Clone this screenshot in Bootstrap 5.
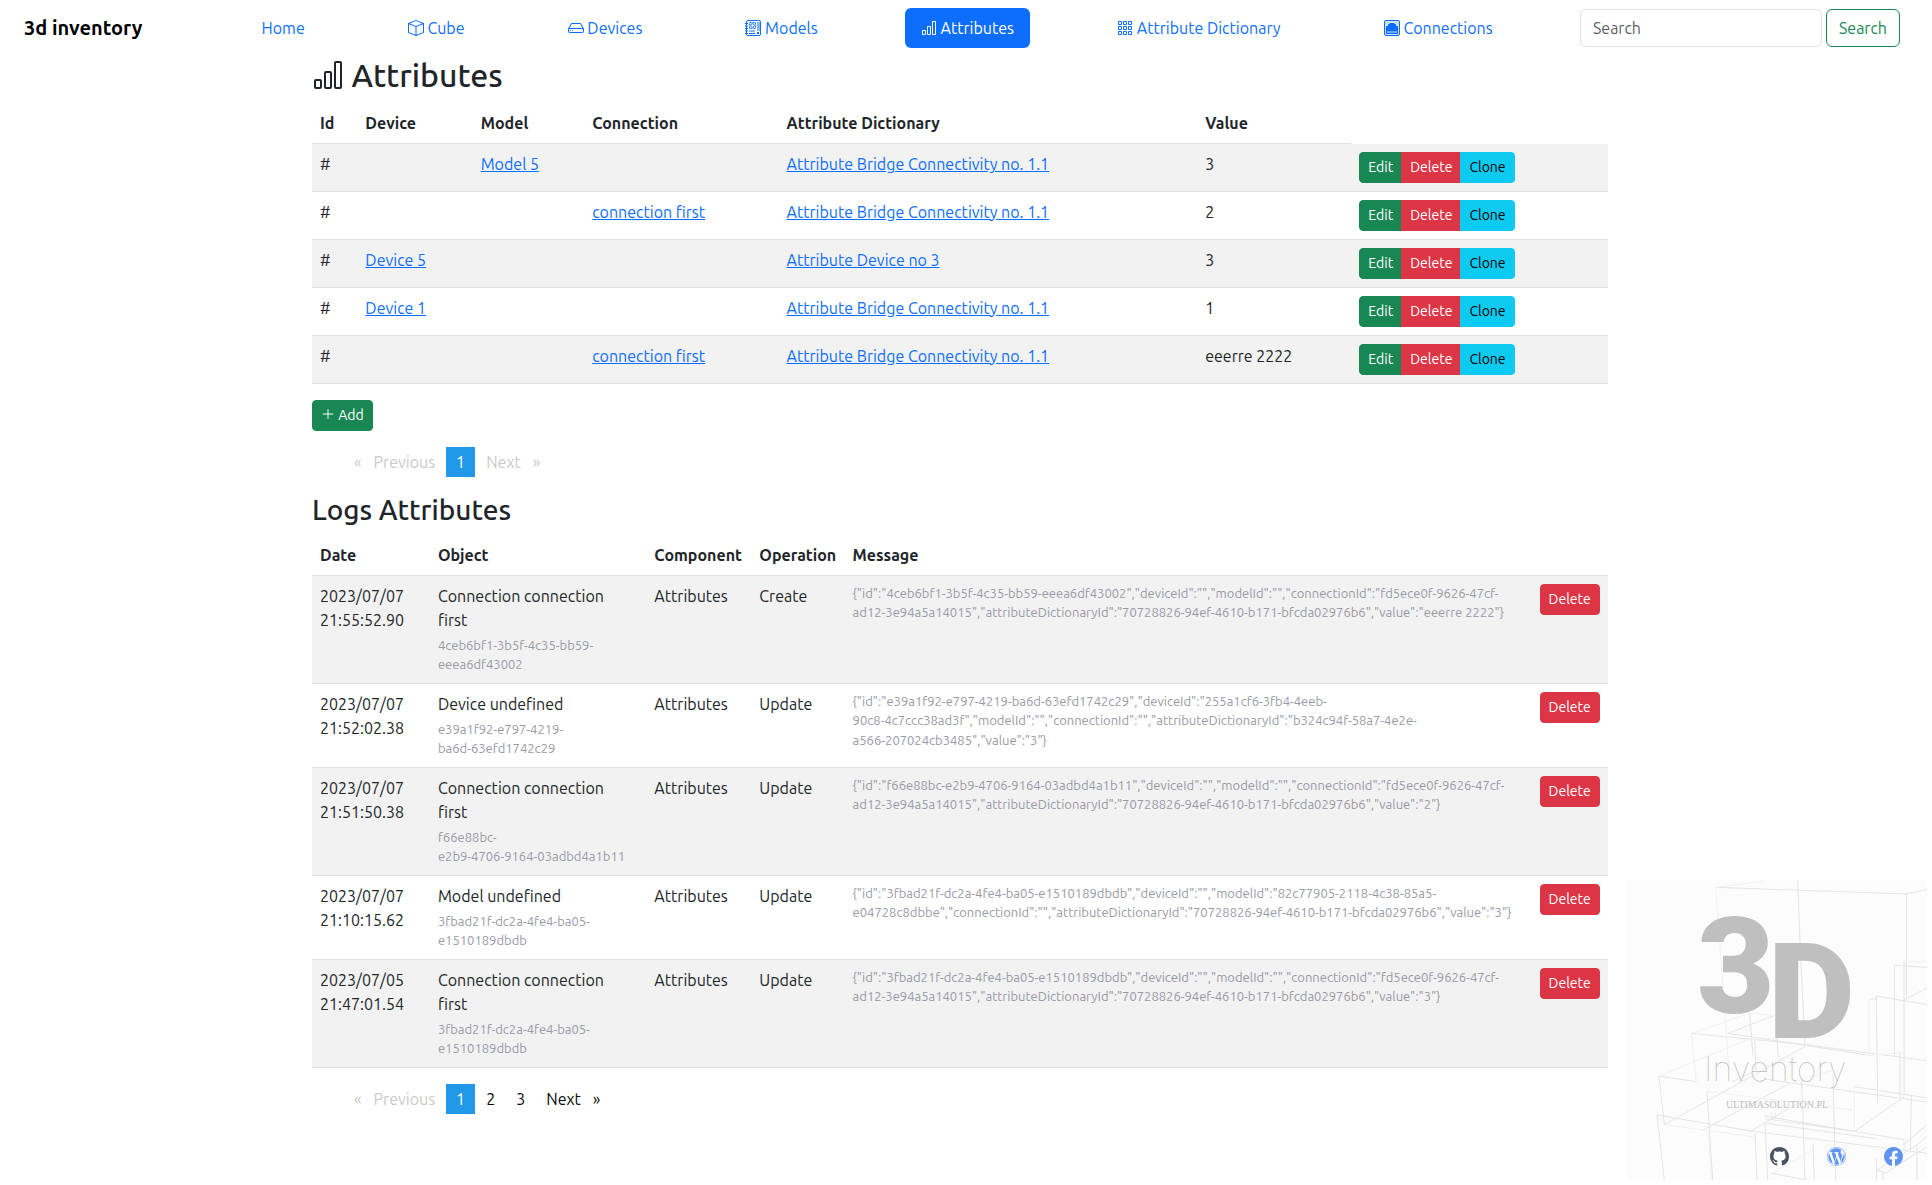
<!doctype html>
<html lang="en">
<head>
<meta charset="utf-8">
<meta name="viewport" content="width=device-width, initial-scale=1">
<title>3d inventory - Attributes</title>
<link href="https://cdn.jsdelivr.net/npm/bootstrap@5.3.0/dist/css/bootstrap.min.css" rel="stylesheet">
<style>
  body { font-family: Ubuntu, "Noto Sans", "Liberation Sans", sans-serif; padding-right: 12px; }
  .ico { width: 1em; height: 1em; fill: currentColor; vertical-align: -.125em; }
  .main-nav { padding: 8px 8px 8px 12px; }
  .main-nav .navbar-brand { font-weight: 700; }
  .search-box { width: 242px; }
  .page-title { font-size: 32px; line-height: 39px; }
  .section-title { font-size: 28px; line-height: 34px; }
  .grid-table { table-layout: fixed; }
  .grid-table .btn { white-space: nowrap; }
  .grid-table thead { vertical-align: bottom; }
  .fine-text { font-size: 13px; line-height: 1.5; color: #9999a6; }
  .pager { list-style: none; margin: 0 0 16px; padding-left: 32px; display: flex; gap: 1px; }
  .pager a, .pager span { display: block; padding: 3px 10px; color: #0a0a0a; text-decoration: none; }
  .pager .is-off { color: #cacaca; }
  .pager .is-current { background: #2199e8; color: #fefefe; }
  .pager .arrow-before::before { content: "«"; display: inline-block; margin-right: 12px; }
  .pager .arrow-after::after { content: "»"; display: inline-block; margin-left: 12px; }
  .brand-corner { position: fixed; right: 5px; bottom: 5px; width: 300px; height: 300px; background: #fcfcfc; }
  .brand-corner .art { position: absolute; inset: 0; width: 100%; height: 100%; }
  .social-bar { position: absolute; right: 24px; bottom: 14px; display: flex; gap: 38px; opacity: .85; }
  .social-bar a { display: block; line-height: 0; color: #4682f0; font-size: 19px; }
  .social-bar a.gh { color: #2b3648; }
</style>
</head>
<body>
<nav class="navbar navbar-expand-lg main-nav">
  <div class="container-fluid flex-nowrap">
    <a class="navbar-brand py-0" href="#">3d inventory</a>
    <ul class="nav nav-pills flex-grow-1 justify-content-evenly ps-3">
      <li class="nav-item"><a class="nav-link" href="#">Home</a></li>
      <li class="nav-item"><a class="nav-link" href="#"><svg class="ico" viewBox="0 0 16 16"><path d="M8.186 1.113a.5.5 0 0 0-.372 0L1.846 3.5 8 5.961 14.154 3.5 8.186 1.113zM15 4.239l-6.5 2.6v7.922l6.5-2.6V4.24zM7.5 14.762V6.838L1 4.239v7.923l6.5 2.6zM7.443.184a1.5 1.5 0 0 1 1.114 0l7.129 2.852A.5.5 0 0 1 16 3.5v8.662a1 1 0 0 1-.629.928l-7.185 2.874a.5.5 0 0 1-.372 0L.63 13.09a1 1 0 0 1-.63-.928V3.5a.5.5 0 0 1 .314-.464L7.443.184z"/></svg> Cube</a></li>
      <li class="nav-item"><a class="nav-link" href="#"><svg class="ico" viewBox="0 0 16 16"><path d="M4.5 11a.5.5 0 1 0 0-1 .5.5 0 0 0 0 1zM3 10.5a.5.5 0 1 1-1 0 .5.5 0 0 1 1 0z"/><path d="M16 11a2 2 0 0 1-2 2H2a2 2 0 0 1-2-2V9.51c0-.418.105-.83.305-1.197l2.472-4.531A1.5 1.5 0 0 1 4.094 3h7.812a1.5 1.5 0 0 1 1.317.782l2.472 4.53c.2.368.305.78.305 1.198V11zM3.655 4.26 1.592 8.043C1.724 8.014 1.86 8 2 8h12c.14 0 .276.014.408.042L12.345 4.26a.5.5 0 0 0-.439-.26H4.094a.5.5 0 0 0-.44.26zM1 10v1a1 1 0 0 0 1 1h12a1 1 0 0 0 1-1v-1a1 1 0 0 0-1-1H2a1 1 0 0 0-1 1z"/></svg> Devices</a></li>
      <li class="nav-item"><a class="nav-link" href="#"><svg class="ico" viewBox="0 0 16 16"><rect x="1.5" y=".5" width="14" height="15" rx="1.5" fill="none" stroke="currentColor"/><path d="M0 3h3v1H0zM0 5.500h3v1H0zM0 8h3v1H0zM0 10.500h3v1H0zM0 13h3v1H0z"/><path d="M12 2h3v9h-3z" opacity=".5"/><rect x="4.500" y="2.500" width="6" height="6" fill="none" stroke="currentColor" stroke-dasharray="2 1"/><circle cx="7.500" cy="5.500" r="1.800" fill="none" stroke="currentColor"/><path d="M4 10.500h6v1H4zM4 13h6v1H4zM12 12h2v2h-2z"/></svg> Models</a></li>
      <li class="nav-item"><a class="nav-link active" aria-current="page" href="#"><svg class="ico" viewBox="0 0 16 16"><path d="M4 11H2v3h2v-3zm5-4H7v7h2V7zm5-5v12h-2V2h2zm-2-1a1 1 0 0 0-1 1v12a1 1 0 0 0 1 1h2a1 1 0 0 0 1-1V2a1 1 0 0 0-1-1h-2zM6 7a1 1 0 0 1 1-1h2a1 1 0 0 1 1 1v7a1 1 0 0 1-1 1H7a1 1 0 0 1-1-1V7zm-5 4a1 1 0 0 1 1-1h2a1 1 0 0 1 1 1v3a1 1 0 0 1-1 1H2a1 1 0 0 1-1-1v-3z"/></svg> Attributes</a></li>
      <li class="nav-item"><a class="nav-link" href="#"><svg class="ico" viewBox="0 0 16 16"><g fill="none" stroke="currentColor"><path d="M1.500 1.500h3v3h-3zM6.500 1.500h3v3h-3zM11.500 1.500h3v3h-3zM1.500 6.500h3v3h-3zM6.500 6.500h3v3h-3zM11.500 6.500h3v3h-3zM1.500 11.500h3v3h-3zM6.500 11.500h3v3h-3zM11.500 11.500h3v3h-3z"/></g></svg> Attribute Dictionary</a></li>
      <li class="nav-item"><a class="nav-link" href="#"><svg class="ico" viewBox="0 0 16 16"><rect x=".5" y=".5" width="15" height="15" rx="1.500" fill="#0d6efd" fill-opacity=".2" stroke="currentColor"/><path fill-rule="evenodd" d="M14 13.500v-7a.5.5 0 0 0-.5-.5H12V4.500a.5.5 0 0 0-.5-.5h-1v-.5A.5.5 0 0 0 10 3H6a.5.5 0 0 0-.5.5V4h-1a.5.5 0 0 0-.5.5V6H2.500a.5.5 0 0 0-.5.5v7a.5.5 0 0 0 .5.5h11a.5.5 0 0 0 .5-.5zM3.500 11h1v2h-1zM5.500 11h1v2h-1zM7.500 11h1v2h-1zM9.500 11h1v2h-1zM11.500 11h1v2h-1z"/></svg> Connections</a></li>
    </ul>
    <form class="d-flex gap-1" role="search">
      <input class="form-control search-box" type="search" placeholder="Search" aria-label="Search">
      <button class="btn btn-outline-success" type="submit">Search</button>
    </form>
  </div>
</nav>

<main class="container">
  <h2 class="page-title"><svg class="ico" viewBox="0 0 16 16"><path d="M4 11H2v3h2v-3zm5-4H7v7h2V7zm5-5v12h-2V2h2zm-2-1a1 1 0 0 0-1 1v12a1 1 0 0 0 1 1h2a1 1 0 0 0 1-1V2a1 1 0 0 0-1-1h-2zM6 7a1 1 0 0 1 1-1h2a1 1 0 0 1 1 1v7a1 1 0 0 1-1 1H7a1 1 0 0 1-1-1V7zm-5 4a1 1 0 0 1 1-1h2a1 1 0 0 1 1 1v3a1 1 0 0 1-1 1H2a1 1 0 0 1-1-1v-3z"/></svg> Attributes</h2>
  <table class="table table-striped grid-table">
    <colgroup><col style="width:3.5%"><col style="width:8.9%"><col style="width:8.6%"><col style="width:15%"><col style="width:32.3%"><col style="width:11.9%"><col style="width:19.8%"></colgroup>
    <thead><tr><th scope="col">Id</th><th scope="col">Device</th><th scope="col">Model</th><th scope="col">Connection</th><th scope="col">Attribute Dictionary</th><th scope="col">Value</th></tr></thead>
    <tbody>
      <tr><td>#</td><td></td><td><a href="#">Model 5</a></td><td></td><td><a href="#">Attribute Bridge Connectivity no. 1.1</a></td><td>3</td><td><div class="btn-group btn-group-sm d-inline-flex align-top"><button type="button" class="btn btn-success">Edit</button><button type="button" class="btn btn-danger">Delete</button><button type="button" class="btn btn-info">Clone</button></div></td></tr>
      <tr><td>#</td><td></td><td></td><td><a href="#">connection first</a></td><td><a href="#">Attribute Bridge Connectivity no. 1.1</a></td><td>2</td><td><div class="btn-group btn-group-sm d-inline-flex align-top"><button type="button" class="btn btn-success">Edit</button><button type="button" class="btn btn-danger">Delete</button><button type="button" class="btn btn-info">Clone</button></div></td></tr>
      <tr><td>#</td><td><a href="#">Device 5</a></td><td></td><td></td><td><a href="#">Attribute Device no 3</a></td><td>3</td><td><div class="btn-group btn-group-sm d-inline-flex align-top"><button type="button" class="btn btn-success">Edit</button><button type="button" class="btn btn-danger">Delete</button><button type="button" class="btn btn-info">Clone</button></div></td></tr>
      <tr><td>#</td><td><a href="#">Device 1</a></td><td></td><td></td><td><a href="#">Attribute Bridge Connectivity no. 1.1</a></td><td>1</td><td><div class="btn-group btn-group-sm d-inline-flex align-top"><button type="button" class="btn btn-success">Edit</button><button type="button" class="btn btn-danger">Delete</button><button type="button" class="btn btn-info">Clone</button></div></td></tr>
      <tr><td>#</td><td></td><td></td><td><a href="#">connection first</a></td><td><a href="#">Attribute Bridge Connectivity no. 1.1</a></td><td>eeerre 2222</td><td><div class="btn-group btn-group-sm d-inline-flex align-top"><button type="button" class="btn btn-success">Edit</button><button type="button" class="btn btn-danger">Delete</button><button type="button" class="btn btn-info">Clone</button></div></td></tr>
    </tbody>
  </table>
  <button type="button" class="btn btn-success btn-sm d-block mb-3"><svg class="ico" viewBox="0 0 16 16"><path d="M8 2a.5.5 0 0 1 .5.5v5h5a.5.5 0 0 1 0 1h-5v5a.5.5 0 0 1-1 0v-5h-5a.5.5 0 0 1 0-1h5v-5A.5.5 0 0 1 8 2z"/></svg> Add</button>
  <ul class="pager" aria-label="Attributes pages">
    <li><span class="is-off arrow-before">Previous</span></li>
    <li><span class="is-current" aria-current="page">1</span></li>
    <li><span class="is-off arrow-after">Next</span></li>
  </ul>

  <h3 class="section-title">Logs Attributes</h3>
  <table class="table table-striped grid-table">
    <colgroup><col style="width:9.1%"><col style="width:16.7%"><col style="width:8.1%"><col style="width:7.2%"><col style="width:53%"><col style="width:5.9%"></colgroup>
    <thead><tr><th scope="col">Date</th><th scope="col">Object</th><th scope="col">Component</th><th scope="col">Operation</th><th scope="col">Message</th><th></th></tr></thead>
    <tbody>
      <tr><td>2023/07/07 21:55:52.90</td><td class="pe-3">Connection connection first<div class="fine-text mt-1">4ceb6bf1-3b5f-4c35-bb59-<br>eeea6df43002</div></td><td>Attributes</td><td>Create</td><td><div class="fine-text">{"id":"4ceb6bf1-3b5f-4c35-bb59-eeea6df43002","deviceId":"","modelId":"","connectionId":"fd5ece0f-9626-47cf-<br>ad12-3e94a5a14015","attributeDictionaryId":"70728826-94ef-4610-b171-bfcda02976b6","value":"eeerre 2222"}</div></td><td><button type="button" class="btn btn-danger btn-sm align-top">Delete</button></td></tr>
      <tr><td>2023/07/07 21:52:02.38</td><td class="pe-3">Device undefined<div class="fine-text mt-1">e39a1f92-e797-4219-<br>ba6d-63efd1742c29</div></td><td>Attributes</td><td>Update</td><td><div class="fine-text">{"id":"e39a1f92-e797-4219-ba6d-63efd1742c29","deviceId":"255a1cf6-3fb4-4eeb-<br>90c8-4c7ccc38ad3f","modelId":"","connectionId":"","attributeDictionaryId":"b324c94f-58a7-4e2e-<br>a566-207024cb3485","value":"3"}</div></td><td><button type="button" class="btn btn-danger btn-sm align-top">Delete</button></td></tr>
      <tr><td>2023/07/07 21:51:50.38</td><td class="pe-3">Connection connection first<div class="fine-text mt-1">f66e88bc-<br>e2b9-4706-9164-03adbd4a1b11</div></td><td>Attributes</td><td>Update</td><td><div class="fine-text">{"id":"f66e88bc-e2b9-4706-9164-03adbd4a1b11","deviceId":"","modelId":"","connectionId":"fd5ece0f-9626-47cf-<br>ad12-3e94a5a14015","attributeDictionaryId":"70728826-94ef-4610-b171-bfcda02976b6","value":"2"}</div></td><td><button type="button" class="btn btn-danger btn-sm align-top">Delete</button></td></tr>
      <tr><td>2023/07/07 21:10:15.62</td><td class="pe-3">Model undefined<div class="fine-text mt-1">3fbad21f-dc2a-4fe4-ba05-<br>e1510189dbdb</div></td><td>Attributes</td><td>Update</td><td><div class="fine-text">{"id":"3fbad21f-dc2a-4fe4-ba05-e1510189dbdb","deviceId":"","modelId":"82c77905-2118-4c38-85a5-<br>e04728c8dbbe","connectionId":"","attributeDictionaryId":"70728826-94ef-4610-b171-bfcda02976b6","value":"3"}</div></td><td><button type="button" class="btn btn-danger btn-sm align-top">Delete</button></td></tr>
      <tr><td>2023/07/05 21:47:01.54</td><td class="pe-3">Connection connection first<div class="fine-text mt-1">3fbad21f-dc2a-4fe4-ba05-<br>e1510189dbdb</div></td><td>Attributes</td><td>Update</td><td><div class="fine-text">{"id":"3fbad21f-dc2a-4fe4-ba05-e1510189dbdb","deviceId":"","modelId":"","connectionId":"fd5ece0f-9626-47cf-<br>ad12-3e94a5a14015","attributeDictionaryId":"70728826-94ef-4610-b171-bfcda02976b6","value":"3"}</div></td><td><button type="button" class="btn btn-danger btn-sm align-top">Delete</button></td></tr>
    </tbody>
  </table>
  <ul class="pager" aria-label="Logs pages">
    <li><span class="is-off arrow-before">Previous</span></li>
    <li><span class="is-current" aria-current="page">1</span></li>
    <li><a href="#">2</a></li>
    <li><a href="#">3</a></li>
    <li><a class="arrow-after" href="#">Next</a></li>
  </ul>
</main>

<footer class="brand-corner">
  <svg class="art" viewBox="0 0 300 300">
    <g transform="scale(.33333) translate(-22 -30)" fill="none" stroke="#e4e4e4" stroke-width="3">
      <path d="M288 52 860 72 922 58M534 32 541 218M860 72V386M541 218 556 528M824 560V286L922 292M853 275V672M770 378 922 404M770 378 774 698M748 388 770 386M844 394 922 354M215 490 560 524 922 572M325 490 750 556M325 490 465 436M390 430 400 556M405 508 409 600M472 506 476 566M118 618 230 635M134 764 556 530M338 635 400 606M440 628 922 696M112 735 400 784 922 850M118 618 134 764M112 735 134 930M262 664 279 930M246 782 510 640M386 788 530 702M434 738 856 810M704 650 922 684M706 784 853 680M841 548V684M875 674 872 850M706 784 436 746M853 824 922 764M853 810V840M436 760 444 930M406 790 412 930M640 620 648 930M546 628 556 930M580 822 584 930M770 866 770 930M790 906V930M770 902 892 824 922 800M770 902 800 908 922 830M892 824V930M456 910 560 930M440 760 770 806"/>
      <path d="M288 52 430 34M288 52 328 600M215 490 390 430 465 436M215 490 230 635M118 618 405 500M262 664 700 720M134 764 400 800M748 388V556M704 650V784M510 640 640 600M922 276 853 275M266 785 275 930M456 910 580 840M350 508 472 506M750 556 850 548" stroke="#f1f1f1"/>
      <path d="M456 728V745H466V728" stroke-width="2"/>
    </g>
    <g fill="#bfbfbf">
      <text x="70" y="133" font-family="Roboto, sans-serif" font-weight="900" font-size="134">3</text>
      <text x="141" y="158" font-family="Roboto, sans-serif" font-weight="900" font-size="134">D</text>
      <text x="77" y="201" font-family="Inter, sans-serif" font-weight="100" font-size="34">Inventory</text>
      <text x="99" y="228" font-family="Liberation Serif, serif" font-size="10">ULTIMASOLUTION.PL</text>
    </g>
  </svg>
  <div class="social-bar">
    <a class="gh" href="#" aria-label="GitHub"><svg class="ico" viewBox="0 0 16 16"><path d="M8 0C3.580 0 0 3.580 0 8c0 3.540 2.290 6.530 5.470 7.590.4.070.55-.17.55-.38 0-.19-.01-.82-.01-1.490-2.010.37-2.530-.49-2.690-.94-.09-.23-.48-.94-.82-1.130-.28-.15-.68-.52-.01-.53.63-.01 1.080.58 1.230.82.72 1.210 1.870.87 2.330.66.07-.52.28-.87.51-1.070-1.780-.2-3.640-.89-3.640-3.950 0-.87.31-1.590.82-2.150-.08-.2-.36-1.020.08-2.120 0 0 .67-.21 2.200.82.64-.18 1.320-.27 2-.27.68 0 1.360.09 2 .27 1.530-1.040 2.200-.82 2.200-.82.44 1.100.16 1.920.08 2.120.51.56.82 1.270.82 2.150 0 3.070-1.870 3.750-3.650 3.950.29.25.54.73.54 1.480 0 1.070-.01 1.930-.01 2.200 0 .21.15.46.55.38A8.012 8.012 0 0 0 16 8c0-4.420-3.580-8-8-8z"/></svg></a>
    <a href="#" aria-label="WordPress"><svg class="ico" viewBox="0 0 16 16"><path d="M12.633 7.653c0-.848-.305-1.435-.566-1.892l-.08-.13c-.317-.51-.594-.958-.594-1.480 0-.63.478-1.218 1.152-1.218.02 0 .039.002.058.003l.031.003A6.838 6.838 0 0 0 8 1.137 6.855 6.855 0 0 0 2.266 4.230c.16.005.313.009.442.009.717 0 1.828-.087 1.828-.087.37-.022.414.521.044.565 0 0-.371.044-.785.065l2.500 7.434 1.500-4.506-1.070-2.929c-.369-.022-.719-.065-.719-.065-.37-.022-.326-.588.043-.566 0 0 1.134.087 1.808.087.718 0 1.830-.087 1.830-.087.37-.022.413.522.043.566 0 0-.372.043-.785.065l2.480 7.377.684-2.287.054-.173c.27-.86.469-1.495.469-2.046zM1.137 8a6.864 6.864 0 0 0 3.868 6.176L1.730 5.206A6.837 6.837 0 0 0 1.137 8z"/><path d="M6.061 14.583 8.120 8.600l2.109 5.780c.014.033.03.064.049.094a6.854 6.854 0 0 1-4.218.109zm7.960-9.876c.03.219.047.453.047.706 0 .696-.13 1.479-.522 2.458l-2.096 6.060a6.860 6.860 0 0 0 2.572-9.224z"/><path fill-rule="evenodd" d="M0 8c0-4.411 3.589-8 8-8 4.410 0 8 3.589 8 8s-3.590 8-8 8c-4.411 0-8-3.589-8-8zm.367 0c0 4.209 3.424 7.633 7.633 7.633 4.208 0 7.632-3.424 7.632-7.633C15.632 3.790 12.208.367 8 .367 3.790.367.367 3.790.367 8z"/></svg></a>
    <a href="#" aria-label="Facebook"><svg class="ico" viewBox="0 0 16 16"><path d="M16 8.049c0-4.446-3.582-8.050-8-8.050C3.580 0-.002 3.603-.002 8.050c0 4.017 2.926 7.347 6.750 7.951v-5.625h-2.030V8.050H6.750V6.275c0-2.017 1.195-3.131 3.022-3.131.876 0 1.791.157 1.791.157v1.980h-1.009c-.993 0-1.303.621-1.303 1.258v1.510h2.218l-.354 2.326H9.250V16c3.824-.604 6.750-3.934 6.750-7.951z"/></svg></a>
  </div>
</footer>
<script src="https://cdn.jsdelivr.net/npm/bootstrap@5.3.0/dist/js/bootstrap.bundle.min.js"></script>
</body>
</html>
